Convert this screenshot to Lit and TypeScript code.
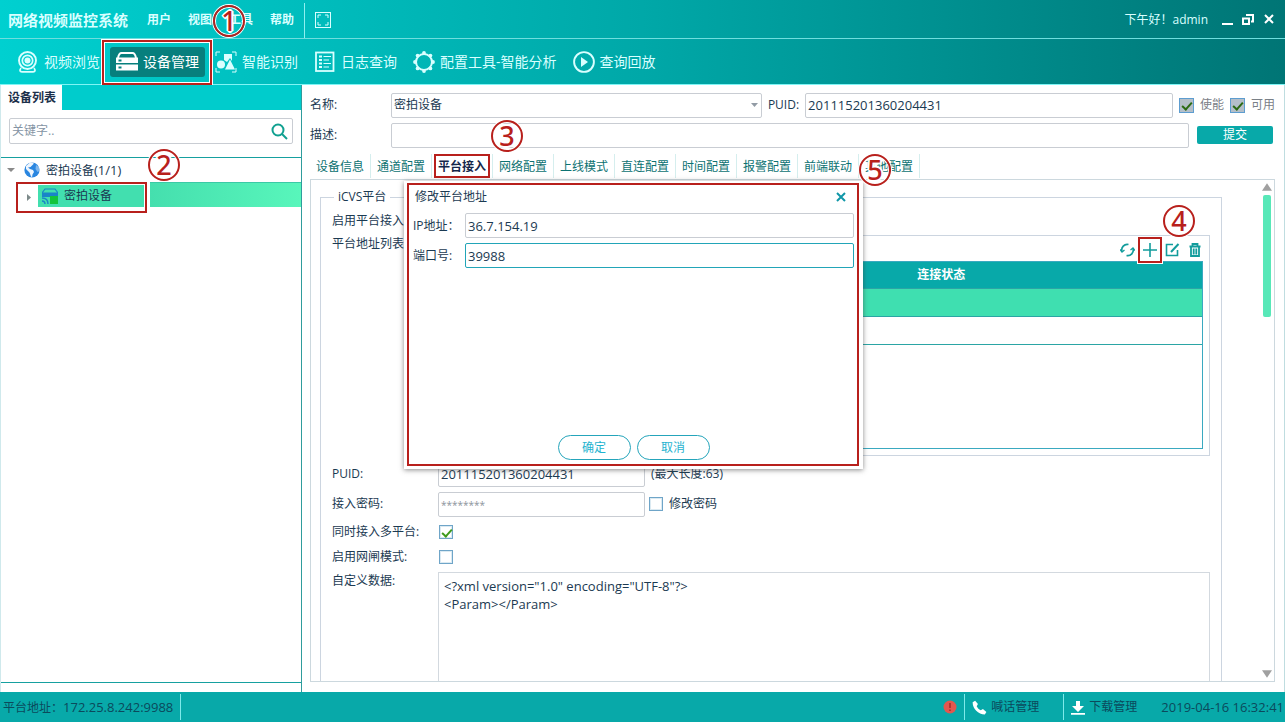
import { LitElement, html, css, svg } from "lit";
import { customElement, property, state } from "lit/decorators.js";

const toolIcons: Record<string, unknown> = {
  camera: svg`<circle cx="10.500" cy="9.500" r="8.500" fill="none" stroke="currentColor" stroke-width="1.900"/><circle cx="10.500" cy="9.500" r="5.200" fill="none" stroke="currentColor" stroke-width="1.700"/><circle cx="10.500" cy="9.500" r="3" fill="currentColor"/><path d="M4 17q-2.500 3.500 1 3.800h11q3.500-.3 1-3.800" fill="none" stroke="currentColor" stroke-width="1.700"/>`,
  device: svg`<path d="M2 7q1-5 3.500-5h11Q19 2 20 7" fill="none" stroke="currentColor" stroke-width="2"/><path fill-rule="evenodd" d="M0 6.500h22V12H0zM2.500 8.500v2h3v-2zM0 13.500h22v6H0zM2.500 15.500v2h3v-2z" fill="currentColor"/>`,
  ai: svg`<path d="M1 5V1h4M17 1h4v4M21 17v4h-4M5 21H1v-4" fill="none" stroke="currentColor" stroke-width="1"/><path d="M9 3h8v7l-2-3-3 4-3-2z" fill="currentColor"/><circle cx="6" cy="13.500" r="4" fill="currentColor"/><path d="M15 8.500 20 18.500H10z" fill="currentColor"/>`,
  log: svg`<rect x="2" y="1.500" width="17.500" height="18.500" fill="none" stroke="currentColor" stroke-width="1.800"/><path d="M5 5.500h3M5 9h3M5 12.500h3M5 16h3" stroke="currentColor" stroke-width="2"/><path d="M9.500 5.500H17M9.500 9H15M9.500 12.500H17M9.500 16H15" stroke="currentColor" stroke-width="1.200"/>`,
  gear: svg`<circle cx="11" cy="11" r="8" fill="none" stroke="currentColor" stroke-width="2"/><g fill="currentColor"><circle cx="11" cy="2" r="1.900"/><circle cx="11" cy="20" r="1.900"/><circle cx="2" cy="11" r="1.900"/><circle cx="20" cy="11" r="1.900"/><circle cx="4.600" cy="4.600" r="1.900"/><circle cx="17.400" cy="4.600" r="1.900"/><circle cx="4.600" cy="17.400" r="1.900"/><circle cx="17.400" cy="17.400" r="1.900"/></g>`,
  play: svg`<circle cx="11" cy="11" r="9.900" fill="none" stroke="currentColor" stroke-width="1.900"/><path d="M8 6v10l7-5z" fill="currentColor"/>`,
};

const tools: [string, string][] = [
  ["camera", "视频浏览"],
  ["device", "设备管理"],
  ["ai", "智能识别"],
  ["log", "日志查询"],
  ["gear", "配置工具-智能分析"],
  ["play", "查询回放"],
];

const tabs = ["设备信息", "通道配置", "平台接入", "网络配置", "上线模式", "直连配置", "时间配置", "报警配置", "前端联动", "其他配置"];

@customElement("step-mark")
export class StepMark extends LitElement {
  @property() n = "";
  static styles = css`
    :host {
      position: absolute;
      z-index: 5;
      box-sizing: border-box;
      width: 32px;
      height: 32px;
      border: 2px solid #b8201c;
      border-radius: 50%;
      box-shadow: 0 0 0 1px #fff, inset 0 0 0 1px #fff;
      color: #b8201c;
      font: 500 27px/28px "Noto Sans", "Open Sans", sans-serif;
      text-align: center;
      text-shadow: 2px 0 #fff, -2px 0 #fff, 0 2px #fff, 0 -2px #fff, 1px 1px #fff, -1px -1px #fff, 1px -1px #fff, -1px 1px #fff;
      pointer-events: none;
    }
  `;
  render() {
    return html`${this.n}`;
  }
}

@customElement("app-root")
export class AppRoot extends LitElement {
  @state() private tab = "平台接入";
  @state() private tool = "设备管理";

  static styles = css`
    :host {
      display: flex;
      flex-direction: column;
      height: 100vh;
      font: 12px/18px "Open Sans", "Noto Sans CJK SC", sans-serif;
      color: #1b3a52;
      background: #fff;
    }
    * { box-sizing: border-box; }
    button, input, select, textarea { font: inherit; color: inherit; margin: 0; }
    button { border: 0; background: none; padding: 0; }
    svg { display: block; flex: none; }
    .num { font-size: 13px; }
    .head {
      flex: none;
      color: #d9ffff;
      background: linear-gradient(90deg, #00d0d0, #00a8a8 50%, #007575);
      border-bottom: 1px solid #7ff5f5;
    }
    .titlebar {
      position: relative;
      display: flex;
      align-items: center;
      height: 39px;
      padding: 2px 9px 0 8px;
      border-bottom: 1px solid #6fdede;
    }
    .title { margin: 0 19px 0 0; font-size: 15px; font-weight: 700; }
    .menu { display: flex; gap: 17px; }
    .menu button { font-weight: 700; }
    .bar { align-self: stretch; width: 1px; margin: 1px 10px 0; background: #8ff0f0; }
    .hello { margin-left: auto; }
    .win { display: flex; gap: 7px; margin-left: 12px; color: #fff; }
    .toolbar { display: flex; align-items: center; gap: 16px; height: 45px; padding: 0 17px; }
    .tool { position: relative; display: flex; align-items: center; gap: 5px; height: 30px; font-size: 14px; white-space: nowrap; }
    .tool.on { margin: 0 -6px; padding: 0 6px; color: #fff; border-radius: 3px; background: #077f7d; }
    .frame { position: absolute; border: 2px solid #b8201c; box-shadow: 0 0 0 1px #fff, inset 0 0 0 1px #fff; pointer-events: none; }
    .tool .frame { inset: -7px -7px -8px -8px; }

    .main { flex: 1; display: flex; min-height: 0; }
    .side { position: relative; flex: none; width: 302px; display: flex; flex-direction: column; border-right: 1px solid #2f9c9c; border-left: 1px solid #cfe9ec; }
    .sidehead { display: flex; height: 25px; background: #00cccc; }
    .sidehead h2 { margin: 0; padding: 0 6px 0 7px; font-size: 12px; line-height: 25px; font-weight: 600; background: #fff; color: #1b2f4a; }
    .search { display: flex; align-items: center; margin: 8px 8px 13px; height: 26px; padding: 0 4px 0 2px; border: 1px solid #c9cdd3; border-radius: 2px; }
    .search input { flex: 1; min-width: 0; border: 0; outline: 0; padding: 0; background: none; }
    .search input::placeholder { color: #8494a4; opacity: 1; }
    .tree { flex: 1; margin: 0 0 9px; padding: 0; list-style: none; border-top: 1px solid #16a0a0; border-bottom: 1px solid #16a0a0; }
    .root { display: flex; align-items: center; height: 24px; padding-left: 6px; gap: 8px; }
    .root svg + svg { margin-right: -3px; }
    .leaf { display: flex; gap: 3px; height: 25px; padding-left: 15px; }
    .leaf::after { content: ""; flex: 1; border-top: 1px solid #3bc9a6; background: linear-gradient(90deg, #45dfae, #58f6bb); }
    .pick { position: relative; display: flex; align-items: center; width: 131px; height: 31px; padding: 3px; background: #fff; }
    .pick .frame { inset: 0; box-shadow: 0 0 0 1px #fff; }
    .pick .arrow { margin: 0 6px 0 8px; }
    .pick .chip { flex: 1; display: flex; align-items: center; gap: 6px; align-self: flex-start; height: 22px; padding-left: 4px; background: #42dfaf; }

    .work { position: relative; flex: 1; min-width: 0; display: flex; flex-direction: column; padding: 8px 9px 10px 8px; border-right: 1px solid #bfdde0; }
    .line { display: flex; align-items: center; height: 24px; margin-bottom: 6px; }
    .line > label:first-child { width: 81px; flex: none; }
    .field { height: 25px; min-width: 0; border: 1px solid #c9cdd3; border-radius: 2px; background: #fff; padding: 0 2px; outline: 0; font-size: 13px; }
    .combo { flex: 371; display: grid; align-items: center; }
    .combo > * { grid-area: 1 / 1; }
    .combo select { appearance: none; font-size: 12px; }
    .combo svg { justify-self: end; margin-right: 4px; pointer-events: none; }
    .puidlabel { margin: 0 6px; }
    .flex { flex: 362; }
    .ck { appearance: none; position: relative; flex: none; width: 14px; height: 14px; border: 1px solid #6fa5c8; background: #fff; box-shadow: inset 0 0 0 1px #dbeaf2; }
    .ck:checked::after { content: ""; position: absolute; left: 4px; top: 1px; width: 4px; height: 8px; border: solid #3e9a1c; border-width: 0 2px 2px 0; transform: rotate(42deg); }
    .ck:disabled { background: #b4bfc9; border-color: #5d9dd0; width: 15px; height: 15px; box-shadow: none; }
    .ck:disabled::after { border-color: #2b6a12; }
    .off { display: flex; align-items: center; gap: 6px; margin-left: 6px; color: #7a8087; white-space: nowrap; }
    .submit { flex: none; width: 76px; height: 18px; margin: 0 2px 0 8px; border-radius: 2px; background: #08a9a9; color: #fff; }
    .tabs { display: flex; margin: 1px 0 0; height: 25px; }
    .tabs button { position: relative; width: 61px; height: 24px; padding-top: 1px; border-right: 1px solid #d5eeee; color: #0c7272; white-space: nowrap; }
    .tabs .on { color: #14264a; font-weight: 600; }
    .tabs .frame { inset: 0 2px 0 2px; box-shadow: none; }

    .panel { flex: 1; min-height: 0; display: flex; overflow: hidden; border: 1px solid #ccd8de; }
    .plat { flex: 1; min-width: 0; margin: 8px 38px 0 9px; padding: 6px 11px 0; border: 1px solid #ccd5e0; height: 600px; }
    .plat legend { padding: 0 4px; margin-left: 2px; height: 18px; }
    .rows { display: flex; flex-direction: column; gap: 6px; }
    .row { display: flex; align-items: center; }
    .row > label:first-child, .row > .lab { width: 106px; flex: none; white-space: nowrap; }
    .row.low { height: 17px; }
    .row.mid { height: 24px; }
    .row.chk { height: 19px; }
    .row.chk .ck { margin-left: 1px; }
    .row.top { align-items: flex-start; }
    .short { width: 207px; }
    .tail { margin-left: 6px; }
    .tail.pw { display: flex; align-items: center; gap: 6px; margin-left: 4px; }
    .short::placeholder { color: #8c949c; opacity: 1; font-size: 10px; }
    .group { flex: 1; min-width: 0; padding: 0 6px 6px; border: 1px solid #ccd5e0; }
    .acts { display: flex; justify-content: flex-end; align-items: center; gap: 8px; height: 25px; padding: 2px 1px 0 0; color: #129c9c; }
    .acts button { position: relative; }
    .acts .frame { inset: -6px -5px -6px -5px; }
    .grid { height: 188px; border: 1px solid #3aa9c0; }
    .grid table { width: 100%; table-layout: fixed; border-collapse: collapse; }
    .grid col.a { width: 31%; }
    .grid th { height: 26px; padding: 0; background: #08a9a9; color: #fff; font-weight: 600; }
    .grid td { height: 28px; padding: 0; border-top: 1px solid #2ba5a5; border-bottom: 1px solid #2ba5a5; }
    .grid tr.sel td { background: #3fdfb0; }
    .xml { flex: 1; min-width: 0; height: 180px; padding: 4px 5px; border: 1px solid #d3d9df; resize: none; outline: 0; overflow: hidden; font-size: 13px; line-height: 18px; }
    .scroll { flex: none; display: flex; flex-direction: column; align-items: center; gap: 3px; width: 14px; padding: 2px 0; color: #a0a0a0; }
    .thumb { width: 8px; height: 122px; border-radius: 2px; background: #58e8b8; }
    .scroll svg:last-child { margin-top: auto; }

    .dialog { position: absolute; z-index: 3; left: 102px; top: 96px; width: 459px; height: 288px; padding: 5px 9px 9px 9px; display: flex; flex-direction: column; background: #fff; box-shadow: 0 1px 5px rgba(60, 60, 60, 0.6); }
    .dialog > .frame { inset: 2px 4px 3px 3px; box-shadow: none; }
    .dhead { display: flex; justify-content: space-between; align-items: center; height: 22px; margin: 0 8px 5px 2px; }
    .dhead h3 { margin: 0; font-size: 12px; font-weight: 400; }
    .drow { display: flex; align-items: center; margin-bottom: 5px; }
    .drow label { width: 52px; white-space: nowrap; }
    .drow .field { flex: 1; }
    .drow .field.focus { border-color: #22a5b8; }
    .dfoot { display: flex; justify-content: center; gap: 6px; margin-top: auto; }
    .dfoot button { width: 73px; height: 25px; border: 1px solid #25a5bb; border-radius: 13px; color: #1fb3cf; }

    .status { flex: none; display: flex; align-items: center; height: 30px; padding: 0 1px 0 3px; background: #08a9a9; color: #0b4a5c; white-space: nowrap; }
    .status i { width: 1px; height: 26px; background: #7eeaea; margin: 0 7px; }
    .status .gap { margin-left: 24px; }
    .status button { display: flex; align-items: center; gap: 4px; height: 26px; }
    .status .alert { margin-left: auto; }
    .status time { margin-left: 24px; }

    .s1 { left: 213px; top: 5px; }
    .s2 { left: 147px; top: 64px; }
    .s3 { left: 189px; top: 35px; }
    .s5 { left: 557px; top: 69px; }
    .s4 { left: 20px; top: -38px; }
  `;

  private up = svg`<path d="M6 0 12 9H0z" fill="currentColor"/>`;

  render() {
    return html`
      <header class="head">
        <div class="titlebar">
          <h1 class="title">网络视频监控系统</h1>
          <nav class="menu">
            <button>用户</button><button>视图</button><button>工具</button><button>帮助</button>
          </nav>
          <span class="bar"></span>
          <button aria-label="全屏">
            <svg width="16" height="16" viewBox="0 0 16 16" fill="none" stroke="currentColor"><rect x=".5" y=".5" width="15" height="15"/><path d="M3 6V3h3M10 3h3v3M13 10v3h-3M6 13H3v-3"/></svg>
          </button>
          <span class="hello">下午好！admin</span>
          <div class="win">
            <button aria-label="最小化"><svg width="14" height="14" viewBox="0 0 14 14"><path d="M2 11h11" stroke="currentColor" stroke-width="2"/></svg></button>
            <button aria-label="还原"><svg width="14" height="14" viewBox="0 0 14 14" fill="none" stroke="currentColor" stroke-width="2"><rect x="2" y="5.500" width="6" height="5.500"/><path d="M5 2h7v6.500h-2"/></svg></button>
            <button aria-label="关闭"><svg width="14" height="14" viewBox="0 0 14 14"><path d="m3 2 8 8m0-8-8 8" stroke="currentColor" stroke-width="2"/></svg></button>
          </div>
          <step-mark class="s1" n="1"></step-mark>
        </div>
        <nav class="toolbar">
          ${tools.map(
            ([icon, name]) => html`<button class="tool ${this.tool === name ? "on" : ""}" @click=${() => (this.tool = name)}>
              <svg width="22" height="22" viewBox="0 0 22 22">${toolIcons[icon]}</svg>${name}
              ${this.tool === name ? html`<span class="frame"></span>` : ""}
            </button>`
          )}
        </nav>
      </header>

      <div class="main">
        <aside class="side">
          <div class="sidehead"><h2>设备列表</h2></div>
          <div class="search">
            <input aria-label="关键字" placeholder="关键字.." />
            <button aria-label="搜索"><svg width="17" height="17" viewBox="0 0 17 17" fill="none" stroke="#10a090" stroke-width="2"><circle cx="7" cy="7" r="5.500"/><path d="m11 11 5 5"/></svg></button>
          </div>
          <ul class="tree">
            <li class="root">
              <svg width="8" height="5" viewBox="0 0 8 5"><path d="M0 0h8L4 4z" fill="#8a8a8a"/></svg>
              <svg width="18" height="18" viewBox="0 0 18 18"><circle cx="9" cy="9" r="7.600" fill="#2a86e0"/><path d="M7 1.600c3-.5 4 .4 3.500 1.400L9 4.500 7.500 6 5 6.500 7 8l3 1 1 2-1.500 2.500L9 16.500C7 15 7.500 12 5.500 10.500L3 8V5z" fill="#fff" opacity=".92"/><path d="M13 4l3 2 .5 4-2 1-2-3z" fill="#fff" opacity=".4"/></svg>
              <span>密拍设备<span class="num">(1/1)</span></span>
            </li>
            <li class="leaf">
              <div class="pick">
                <svg class="arrow" width="5" height="8" viewBox="0 0 5 8"><path d="M0 0v7l4-3.500z" fill="#7d8a8a"/></svg>
                <span class="chip">
                  <svg width="16" height="16" viewBox="0 0 16 16"><path d="M3 1h10l3 4H0z" fill="none" stroke="#1985c8" stroke-width="1.200"/><path d="M0 5h16v4H0z" fill="#1985c8"/><path d="M8 8h8v8H8z" fill="#12c43c"/><path d="M0 10q6 0 6 6M0 13q3 0 3 3" fill="none" stroke="#1985c8" stroke-width="1.400"/></svg>
                  密拍设备
                </span>
                <span class="frame"></span>
              </div>
            </li>
          </ul>
          <step-mark class="s2" n="2"></step-mark>
        </aside>

        <main class="work">
          <div class="line">
            <label for="name">名称:</label>
            <div class="combo">
              <select id="name" class="field"><option>密拍设备</option></select>
              <svg width="7" height="5" viewBox="0 0 7 5"><path d="M0 0h7L3.500 4z" fill="#929ba5"/></svg>
            </div>
            <label class="puidlabel" for="puid">PUID:</label>
            <input id="puid" class="field flex" value="201115201360204431" />
            <label class="off"><input class="ck" type="checkbox" checked disabled />使能</label>
            <label class="off"><input class="ck" type="checkbox" checked disabled />可用</label>
          </div>
          <div class="line">
            <label for="desc">描述:</label>
            <input id="desc" class="field flex" />
            <button class="submit">提交</button>
          </div>
          <nav class="tabs">
            ${tabs.map(
              (t) => html`<button class=${this.tab === t ? "on" : ""} @click=${() => (this.tab = t)}>
                ${t}${this.tab === t ? html`<span class="frame"></span>` : ""}
              </button>`
            )}
          </nav>
          <section class="panel">
            <fieldset class="plat">
              <legend>iCVS平台</legend>
              <div class="rows">
                <div class="row low"><span class="lab">启用平台接入:</span></div>
                <div class="row top">
                  <span class="lab">平台地址列表:</span>
                  <div class="group">
                    <div class="acts">
                      <button aria-label="刷新"><svg width="15" height="14" viewBox="0 0 15 14" fill="none" stroke="currentColor" stroke-width="1.700"><path d="M2 8.500A5.500 5.500 0 0 1 8.500 1.500M13 5.500A5.500 5.500 0 0 1 6.500 12.500"/><path d="M0 6.500l2 2.500 2.500-2M10.500 7 13 5l2 2.500" stroke-width="1.300"/></svg></button>
                      <button aria-label="添加"><svg width="14" height="14" viewBox="0 0 14 14" stroke="currentColor" stroke-width="1.600"><path d="M7 0v14M0 7h14"/></svg><span class="frame"></span><step-mark class="s4" n="4"></step-mark></button>
                      <button aria-label="编辑"><svg width="15" height="14" viewBox="0 0 15 14" fill="none" stroke="currentColor" stroke-width="1.600"><path d="M8 1.500H1.500v11h11V7"/><path d="M6 9l7.500-8" stroke-width="2"/></svg></button>
                      <button aria-label="删除"><svg width="14" height="14" viewBox="0 0 14 14" fill="none" stroke="currentColor" stroke-width="1.800"><path d="M1.500 3.500h11M4.500 2.800V1h5v1.800M3 4v9h8V4M5.700 5.500v6M8.300 5.500v6"/></svg></button>
                    </div>
                    <div class="grid">
                      <table>
                        <colgroup><col class="a" /><col /></colgroup>
                        <thead><tr><th></th><th>连接状态</th></tr></thead>
                        <tbody><tr class="sel"><td></td><td></td></tr><tr><td></td><td></td></tr></tbody>
                      </table>
                    </div>
                  </div>
                </div>
                <div class="row mid">
                  <label for="puid2">PUID:</label>
                  <input id="puid2" class="field short" value="201115201360204431" />
                  <span class="tail">(最大长度:63)</span>
                </div>
                <div class="row mid">
                  <label for="pwd">接入密码:</label>
                  <input id="pwd" class="field short" placeholder="********" />
                  <label class="tail pw"><input class="ck" type="checkbox" />修改密码</label>
                </div>
                <div class="row chk"><label for="multi">同时接入多平台:</label><input id="multi" class="ck" type="checkbox" checked /></div>
                <div class="row chk"><label for="gate">启用网闸模式:</label><input id="gate" class="ck" type="checkbox" /></div>
                <div class="row top">
                  <label for="xml">自定义数据:</label>
                  <textarea id="xml" class="xml" .value=${'<?xml version="1.0" encoding="UTF-8"?>\n<Param></Param>'}></textarea>
                </div>
              </div>
            </fieldset>
            <div class="scroll">
              <svg width="10" height="10" viewBox="0 0 12 9">${this.up}</svg>
              <span class="thumb"></span>
              <svg width="10" height="10" viewBox="0 0 12 9"><path d="M0 0h12L6 9z" fill="currentColor"/></svg>
            </div>
          </section>
          <section class="dialog" role="dialog" aria-label="修改平台地址">
            <div class="dhead">
              <h3>修改平台地址</h3>
              <button aria-label="关闭"><svg width="10" height="10" viewBox="0 0 10 10"><path d="m1 1 8 8m0-8-8 8" stroke="#1097a8" stroke-width="2"/></svg></button>
            </div>
            <div class="drow"><label for="ip">IP地址：</label><input id="ip" class="field" value="36.7.154.19" /></div>
            <div class="drow"><label for="port">端口号:</label><input id="port" class="field focus" value="39988" /></div>
            <div class="dfoot"><button>确定</button><button>取消</button></div>
            <span class="frame"></span>
          </section>
          <step-mark class="s3" n="3"></step-mark>
          <step-mark class="s5" n="5"></step-mark>
        </main>
      </div>

      <footer class="status">
        <span>平台地址：<span class="num">172.25.8.242:9988</span></span><i></i>
        <button class="alert" aria-label="告警"><svg width="14" height="14" viewBox="0 0 14 14"><circle cx="7" cy="7" r="6.500" fill="#e2574f"/><path d="M7 3v5M7 9.500v1.500" stroke="#a82c28" stroke-width="1.600"/></svg></button>
        <i></i>
        <button><svg width="15" height="15" viewBox="0 0 24 24"><path fill="#fff" d="M5 1 1 3.500C1 14 10 23 20.500 23L23 19l-5.500-4.500-3.500 2C11 15 9 13 7.500 10l2-3.500z"/></svg>喊话管理</button>
        <i class="gap"></i>
        <button><svg width="14" height="15" viewBox="0 0 14 15"><path fill="#fff" d="M5 1h4v5h4l-6 6-6-6h4zM0 13h14v1.800H0z"/></svg>下载管理</button>
        <time class="num">2019-04-16 16:32:41</time>
      </footer>
    `;
  }
}
